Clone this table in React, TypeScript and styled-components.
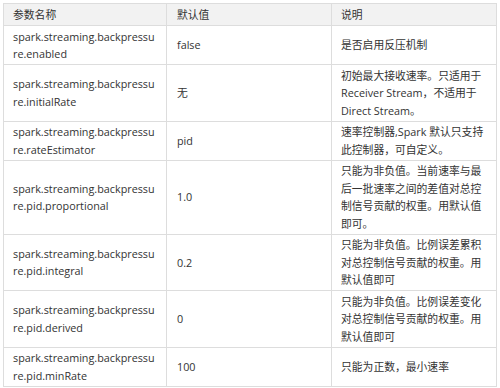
import styled, { createGlobalStyle } from 'styled-components';

const GlobalStyle = createGlobalStyle`
  body {
    margin: 0;
    background: #ffffff;
  }
`;

const Page = styled.div`
  padding: 3px 4px 0 3px;
  width: 500px;
  height: 388px;
  box-sizing: border-box;
`;

const Table = styled.table`
  width: 493px;
  border-collapse: collapse;
  table-layout: fixed;
  font-family: 'Open Sans', 'Noto Sans CJK SC', sans-serif;
  font-size: 10.8px;
  line-height: 17.5px;
  color: #333333;
`;

const HeadCell = styled.th<{ $pad?: number }>`
  background: #f2f2f2;
  border: 1px solid #dddddd;
  font-weight: 400;
  text-align: left;
  height: 22px;
  padding: 1px 8px 1px ${(p) => p.$pad ?? 9}px;
  box-sizing: border-box;
`;

const Cell = styled.td<{ $pad?: number; $breakAll?: boolean }>`
  border: 1px solid #dddddd;
  vertical-align: middle;
  padding: 1.5px ${(p) => (p.$breakAll ? 10 : 8)}px 1.5px ${(p) => p.$pad ?? 9}px;
  word-break: ${(p) => (p.$breakAll ? 'break-all' : 'normal')};
`;

const rows = [
  { name: 'spark.streaming.backpressure.enabled', value: 'false', note: '是否启用反压机制' },
  {
    name: 'spark.streaming.backpressure.initialRate',
    value: '无',
    note: '初始最大接收速率。只适用于Receiver Stream，不适用于Direct Stream。',
  },
  {
    name: 'spark.streaming.backpressure.rateEstimator',
    value: 'pid',
    note: '速率控制器,Spark 默认只支持此控制器，可自定义。',
  },
  {
    name: 'spark.streaming.backpressure.pid.proportional',
    value: '1.0',
    note: '只能为非负值。当前速率与最后一批速率之间的差值对总控制信号贡献的权重。用默认值即可。',
  },
  {
    name: 'spark.streaming.backpressure.pid.integral',
    value: '0.2',
    note: '只能为非负值。比例误差累积对总控制信号贡献的权重。用默认值即可',
  },
  {
    name: 'spark.streaming.backpressure.pid.derived',
    value: '0',
    note: '只能为非负值。比例误差变化对总控制信号贡献的权重。用默认值即可',
  },
  { name: 'spark.streaming.backpressure.pid.minRate', value: '100', note: '只能为正数，最小速率' },
];

function App(): JSX.Element {
  return (
    <Page>
      <GlobalStyle />
      <Table>
        <colgroup>
          <col style={{ width: 163 }} />
          <col style={{ width: 165 }} />
          <col style={{ width: 165 }} />
        </colgroup>
        <thead>
          <tr>
            <HeadCell>参数名称</HeadCell>
            <HeadCell $pad={10}>默认值</HeadCell>
            <HeadCell>说明</HeadCell>
          </tr>
        </thead>
        <tbody>
          {rows.map((r) => (
            <tr key={r.name}>
              <Cell $breakAll>{r.name}</Cell>
              <Cell $pad={10}>{r.value}</Cell>
              <Cell>{r.note}</Cell>
            </tr>
          ))}
        </tbody>
      </Table>
    </Page>
  );
}

export default App;
